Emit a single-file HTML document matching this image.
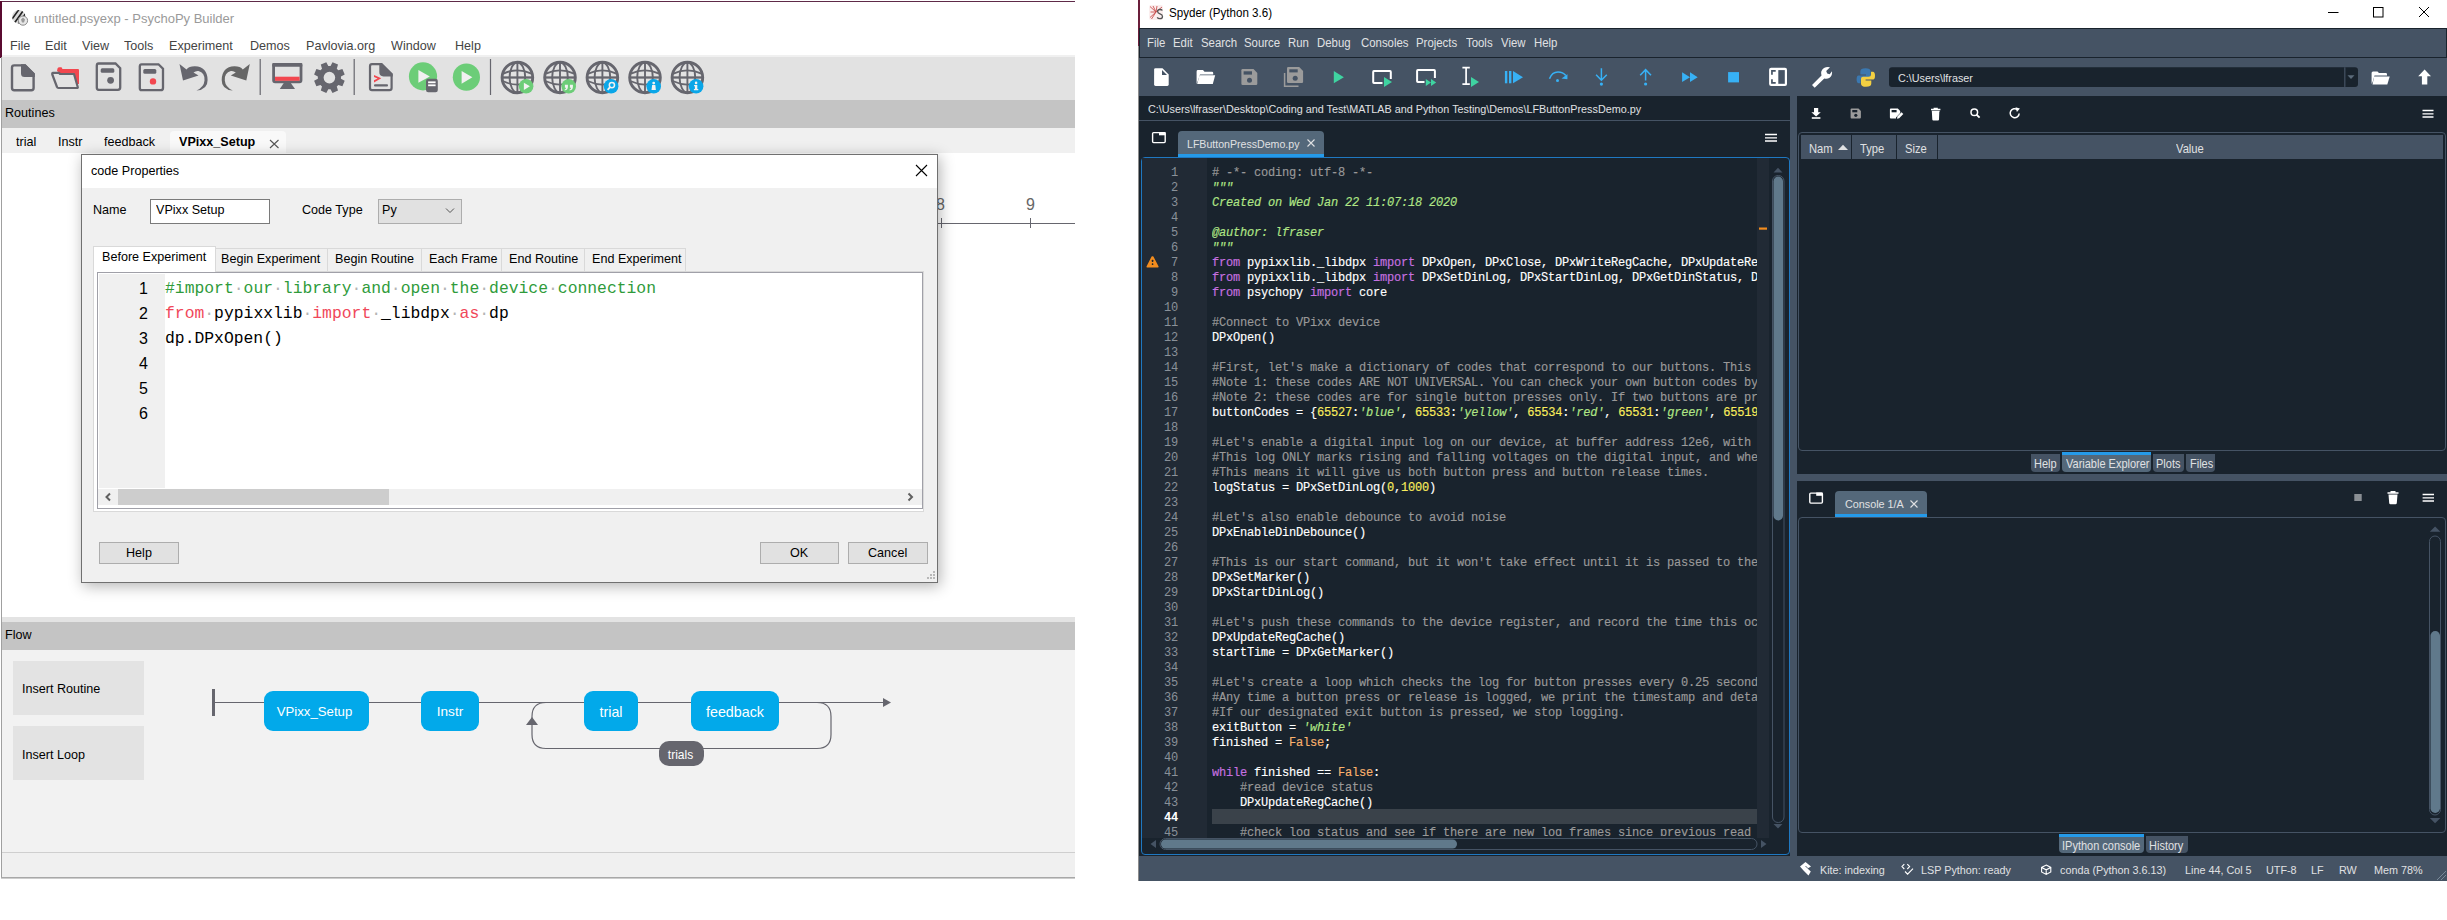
<!DOCTYPE html>
<html><head><meta charset="utf-8">
<style>
*{margin:0;padding:0;box-sizing:border-box}
html,body{width:2447px;height:920px;overflow:hidden;background:#fff;position:relative;font-family:"Liberation Sans",sans-serif}
.a{position:absolute}
.t{position:absolute;white-space:pre;line-height:1}
.pp{font-size:13.6px;color:#000;margin-top:-0.5px;transform:scaleX(0.926);transform-origin:0 0}
.d{font-style:normal;color:#b4b4b4}
.mono{font-family:"Liberation Mono",monospace}
svg{position:absolute;overflow:visible}
</style></head><body>

<!-- ================= PSYCHOPY WINDOW ================= -->
<div class="a" style="left:0;top:0;width:1075px;height:879px;background:#fff">
  <!-- borders -->
  <div class="a" style="left:0;top:1px;width:1075px;height:1px;background:#5e2a48"></div>
  <div class="a" style="left:0;top:1px;width:2px;height:57px;background:#5a0a30"></div>
  <div class="a" style="left:1px;top:57px;width:1px;height:821px;background:#a0a0a0"></div>
<svg class="a" style="left:0;top:0" width="40" height="30">
  <defs><clipPath id="ppc"><circle cx="18.8" cy="16.8" r="6.7"/></clipPath></defs>
  <circle cx="18.8" cy="16.8" r="6.7" fill="#d8d8d8"/>
  <g clip-path="url(#ppc)" stroke="#222" stroke-width="1.6"><path d="M10 22 L20 8 M13 25 L23 11 M17 26 L26 13"/></g>
  <circle cx="23" cy="20.6" r="4.6" fill="#e8e8e8" stroke="#888" stroke-width="1"/>
  <path d="M23 17.5 L25 19.5 L24 22.5 H22 L21 19.5Z" fill="#999"/>
</svg>
  <!-- title -->
  <div class="t" style="left:34px;top:12px;font-size:13px;color:#9a9a9a">untitled.psyexp - PsychoPy Builder</div>
  <!-- menu -->
  <div class="t pp" style="left:10px;top:39px;color:#444">File</div>
  <div class="t pp" style="left:45px;top:39px;color:#444">Edit</div>
  <div class="t pp" style="left:82px;top:39px;color:#444">View</div>
  <div class="t pp" style="left:124px;top:39px;color:#444">Tools</div>
  <div class="t pp" style="left:169px;top:39px;color:#444">Experiment</div>
  <div class="t pp" style="left:250px;top:39px;color:#444">Demos</div>
  <div class="t pp" style="left:306px;top:39px;color:#444">Pavlovia.org</div>
  <div class="t pp" style="left:391px;top:39px;color:#444">Window</div>
  <div class="t pp" style="left:455px;top:39px;color:#444">Help</div>
  <!-- toolbar -->
  <div class="a" style="left:2px;top:55px;width:1073px;height:2px;background:#f0f0f0"></div>
  <div class="a" style="left:2px;top:57px;width:1073px;height:43px;background:#e2e2e2"></div>
  <svg class="a" style="left:0;top:0" width="1075" height="100" viewBox="0 0 1075 100">
<!-- new file -->
<path d="M14.2 65.4 H25 L33.6 74 V88 Q33.6 90.2 31.4 90.2 H14.2 Q12 90.2 12 88 V67.6 Q12 65.4 14.2 65.4Z" fill="none" stroke="#66666e" stroke-width="2.4"/>
<path d="M14 64.2 H25.5 L34.8 73.6 V77 H24.5 Q21 77 21 73.5 V64.2Z" fill="#66666e"/>
<!-- folder -->
<path d="M57 71 L57.5 68.5 Q58 67.3 59.5 67.3 H61.5 L62.5 69 H78 Q79 69 79 70 V84 L77 84 Z" fill="#f2474f"/>
<path d="M53 72.8 H59 L60 74 H74 L77.8 87.2 Q78 88 77 88 H58.5 Q57.3 88 57 87 L52.3 74.5 Q52 72.8 53 72.8Z" fill="#e3e3e3" stroke="#66666e" stroke-width="2.2" stroke-linejoin="round"/>
<!-- save -->
<path d="M98.6 63.5 H115.5 L120.2 68.2 V87.5 Q120.2 89.8 117.9 89.8 H98.6 Q96.8 89.8 96.8 87.5 V65.8 Q96.8 63.5 98.6 63.5Z" fill="none" stroke="#66666e" stroke-width="2.3"/>
<rect x="100.7" y="68.2" width="13.6" height="4.6" rx="1.5" fill="#66666e"/>
<circle cx="110.6" cy="80.3" r="3.4" fill="#66666e"/>
<!-- save as -->
<path d="M141.6 64.3 H158.5 L163 68.8 V88 Q163 90.2 160.8 90.2 H141.6 Q139.8 90.2 139.8 88 V66.6 Q139.8 64.3 141.6 64.3Z" fill="none" stroke="#66666e" stroke-width="2.3"/>
<rect x="143.3" y="69" width="13" height="4.8" rx="1.5" fill="#66666e"/>
<circle cx="153" cy="81.4" r="3.2" fill="#f2474f"/>
<!-- undo -->
<path d="M179.5 64 L183 80.5 L198.5 75.5 L193.5 72.5 Q196 70.5 198.5 71 Q205 72.5 204.5 80.5 Q204 87 196.5 90.6 Q207.8 89.5 207.6 80 Q207.4 67 195 66.3 Q189 66.2 186.5 69.6 Z" fill="#66666e"/>
<!-- redo -->
<g transform="translate(429.3 0) scale(-1 1)"><path d="M179.5 64 L183 80.5 L198.5 75.5 L193.5 72.5 Q196 70.5 198.5 71 Q205 72.5 204.5 80.5 Q204 87 196.5 90.6 Q207.8 89.5 207.6 80 Q207.4 67 195 66.3 Q189 66.2 186.5 69.6 Z" fill="#666"/></g>
<!-- separators -->
<rect x="259.6" y="59" width="1.2" height="36" fill="#66666e"/>
<rect x="353.6" y="59" width="1.2" height="36" fill="#66666e"/>
<rect x="489.9" y="59" width="1.2" height="36" fill="#66666e"/>
<!-- monitor -->
<rect x="273.6" y="64.4" width="27.4" height="17.4" rx="1.5" fill="none" stroke="#66666e" stroke-width="2.8"/>
<rect x="272.2" y="63" width="30.2" height="3.8" rx="1" fill="#66666e"/>
<rect x="275" y="76.7" width="24.6" height="4.1" fill="#f2474f"/>
<path d="M283.8 83 H290.8 L295 89 H279.8Z" fill="#66666e"/>
<!-- gear -->
<g transform="translate(329.4 77.6)">
<path id="gear" fill="#66666e" fill-rule="evenodd" d="M11.55 1.11 L15.29 3.11 L13.01 8.61 L8.95 7.38 L7.38 8.95 L8.61 13.01 L3.11 15.29 L1.11 11.55 L-1.11 11.55 L-3.11 15.29 L-8.61 13.01 L-7.38 8.95 L-8.95 7.38 L-13.01 8.61 L-15.29 3.11 L-11.55 1.11 L-11.55 -1.11 L-15.29 -3.11 L-13.01 -8.61 L-8.95 -7.38 L-7.38 -8.95 L-8.61 -13.01 L-3.11 -15.29 L-1.11 -11.55 L1.11 -11.55 L3.11 -15.29 L8.61 -13.01 L7.38 -8.95 L8.95 -7.38 L13.01 -8.61 L15.29 -3.11 L11.55 -1.11 Z M5.8 0 A5.8 5.8 0 1 0 -5.8 0 A5.8 5.8 0 1 0 5.8 0Z"/>
</g>
<!-- code doc -->
<path d="M372 64.2 H381.5 L391.6 74.2 V88 Q391.6 90.2 389.4 90.2 H372 Q370 90.2 370 88 V66.4 Q370 64.2 372 64.2Z" fill="none" stroke="#66666e" stroke-width="2.2"/>
<path d="M371.5 63.2 H382 L392.7 73.8 V76.4 H383.5 Q379.3 76.4 379.3 72.3 V63.2Z" fill="#66666e"/>
<path d="M374 75 L381.3 78.3 L374 82.5 V80.2 L377.6 78.4 L374 77Z" fill="#f2474f"/>
<rect x="374" y="84.2" width="14" height="2.2" rx="1" fill="#66666e"/>
<!-- run with doc -->
<circle cx="423" cy="76.4" r="14.1" fill="#6ccd78"/>
<path d="M418.4 70 L429.8 76.4 L418.4 82.8Z" fill="#f0f0f0"/>
<rect x="426" y="78.8" width="11.8" height="13.5" rx="2.2" fill="#66666e"/>
<rect x="428.1" y="81.4" width="7.5" height="1.8" fill="#fff"/>
<rect x="428.1" y="84.4" width="7.5" height="1.8" fill="#fff"/>
<!-- play -->
<circle cx="466.4" cy="77.2" r="13.6" fill="#6ccd78"/>
<path d="M461.6 71 L472.4 77.3 L461.6 83.8Z" fill="#f0f0f0"/>
<g stroke="#66666e" fill="none"><circle cx="517.4" cy="77.5" r="15.3" stroke-width="2.9"/><line x1="517.4" y1="62.5" x2="517.4" y2="92.5" stroke-width="1.9"/><line x1="502.4" y1="77.5" x2="532.4" y2="77.5" stroke-width="2.3"/><ellipse cx="517.4" cy="77.5" rx="7.8" ry="15" stroke-width="1.9"/><path d="M503.4 73.7 Q517.4 67.0 531.4 73.7" stroke-width="1.9"/><path d="M503.4 81.3 Q517.4 88.0 531.4 81.3" stroke-width="1.6"/></g><circle cx="526.1" cy="86.3" r="7.3" fill="#6ccd78"/><path d="M523.9 82.7 L529.9 86.3 L523.9 89.89999999999999Z" fill="#f2f2f2"/>
<g stroke="#66666e" fill="none"><circle cx="560" cy="77.5" r="15.3" stroke-width="2.9"/><line x1="560" y1="62.5" x2="560" y2="92.5" stroke-width="1.9"/><line x1="545" y1="77.5" x2="575" y2="77.5" stroke-width="2.3"/><ellipse cx="560" cy="77.5" rx="7.8" ry="15" stroke-width="1.9"/><path d="M546 73.7 Q560 67.0 574 73.7" stroke-width="1.9"/><path d="M546 81.3 Q560 88.0 574 81.3" stroke-width="1.6"/></g><circle cx="568.7" cy="86.3" r="7.3" fill="#6ccd78"/><path d="M564.5 87.8 h3 v-3 h-1.2 q0.2 -1.5 1.5 -1.8 v-1 q-3.3 0.5 -3.3 3.5Z M569.5 87.8 h3 v-3 h-1.2 q0.2 -1.5 1.5 -1.8 v-1 q-3.3 0.5 -3.3 3.5Z" fill="#f2f2f2" transform="rotate(180 568.7 86.3)"/>
<g stroke="#66666e" fill="none"><circle cx="602.4" cy="77.5" r="15.3" stroke-width="2.9"/><line x1="602.4" y1="62.5" x2="602.4" y2="92.5" stroke-width="1.9"/><line x1="587.4" y1="77.5" x2="617.4" y2="77.5" stroke-width="2.3"/><ellipse cx="602.4" cy="77.5" rx="7.8" ry="15" stroke-width="1.9"/><path d="M588.4 73.7 Q602.4 67.0 616.4 73.7" stroke-width="1.9"/><path d="M588.4 81.3 Q602.4 88.0 616.4 81.3" stroke-width="1.6"/></g><circle cx="611.1" cy="86.3" r="7.3" fill="#0aa6e8"/><circle cx="611.9" cy="85.1" r="2.6" fill="none" stroke="#f2f2f2" stroke-width="1.5"/><path d="M610.3000000000001 86.89999999999999 L607.6 89.8" stroke="#f2f2f2" stroke-width="1.8"/>
<g stroke="#66666e" fill="none"><circle cx="645" cy="77.5" r="15.3" stroke-width="2.9"/><line x1="645" y1="62.5" x2="645" y2="92.5" stroke-width="1.9"/><line x1="630" y1="77.5" x2="660" y2="77.5" stroke-width="2.3"/><ellipse cx="645" cy="77.5" rx="7.8" ry="15" stroke-width="1.9"/><path d="M631 73.7 Q645 67.0 659 73.7" stroke-width="1.9"/><path d="M631 81.3 Q645 88.0 659 81.3" stroke-width="1.6"/></g><circle cx="653.7" cy="86.3" r="7.3" fill="#0aa6e8"/><circle cx="653.7" cy="83.1" r="1.4" fill="#f2f2f2"/><path d="M652.1 85.0 h3.2 l0.6 5 h-4.4Z" fill="#f2f2f2"/>
<g stroke="#66666e" fill="none"><circle cx="687.4" cy="77.5" r="15.3" stroke-width="2.9"/><line x1="687.4" y1="62.5" x2="687.4" y2="92.5" stroke-width="1.9"/><line x1="672.4" y1="77.5" x2="702.4" y2="77.5" stroke-width="2.3"/><ellipse cx="687.4" cy="77.5" rx="7.8" ry="15" stroke-width="1.9"/><path d="M673.4 73.7 Q687.4 67.0 701.4 73.7" stroke-width="1.9"/><path d="M673.4 81.3 Q687.4 88.0 701.4 81.3" stroke-width="1.6"/></g><circle cx="696.1" cy="86.3" r="7.3" fill="#0aa6e8"/><circle cx="696.1" cy="82.89999999999999" r="1.3" fill="#f2f2f2"/><path d="M694.1 85.0 h3.2 v4 h1 v1.3 h-4.4 v-1.3 h1 v-2.7 h-0.8Z" fill="#f2f2f2"/></svg>
  <!-- routines header -->
  <div class="a" style="left:2px;top:100px;width:1073px;height:28px;background:#c4c4c4"></div>
  <div class="t pp" style="left:5px;top:106px">Routines</div>
  <!-- tabs row -->
  <div class="a" style="left:2px;top:128px;width:1073px;height:25px;background:#f0f0f0"></div>
  <div class="a" style="left:170px;top:131px;width:116px;height:22px;background:#f9f9f9;border-radius:4px 4px 0 0"></div>
  <div class="t pp" style="left:16px;top:135px">trial</div>
  <div class="t pp" style="left:58px;top:135px">Instr</div>
  <div class="t pp" style="left:104px;top:135px">feedback</div>
  <div class="t pp" style="left:179px;top:135px;font-weight:bold">VPixx_Setup</div>
  <!-- routine canvas -->
  <div class="a" style="left:2px;top:153px;width:1073px;height:464px;background:#fff"></div>
  
  <!-- background timeline -->
<svg class="a" style="left:0;top:0" width="1075" height="880">
  <line x1="930" y1="223.5" x2="1075" y2="223.5" stroke="#66666e" stroke-width="1"/>
  <line x1="941.5" y1="218" x2="941.5" y2="228" stroke="#66666e" stroke-width="1"/>
  <line x1="1030.5" y1="218" x2="1030.5" y2="228" stroke="#66666e" stroke-width="1"/>
  <path d="M270 140 L278.5 148 M278.5 140 L270 148" stroke="#555" stroke-width="1.1"/>
</svg>
<div class="t" style="left:936px;top:197px;font-size:16px;color:#666">8</div>
<div class="t" style="left:1026px;top:197px;font-size:16px;color:#666">9</div>
<!-- flow -->
  <div class="a" style="left:2px;top:617px;width:1073px;height:5px;background:#e3e3e3"></div>
  <div class="a" style="left:2px;top:622px;width:1073px;height:28px;background:#c4c4c4"></div>
  <div class="t pp" style="left:5px;top:628px">Flow</div>
  <div class="a" style="left:2px;top:650px;width:1073px;height:202px;background:#f2f2f2"></div>
  <div class="a" style="left:13px;top:661px;width:131px;height:54px;background:#e3e3e3"></div>
  <div class="a" style="left:13px;top:726px;width:131px;height:54px;background:#e3e3e3"></div>
  <div class="t pp" style="left:22px;top:682px">Insert Routine</div>
  <div class="t pp" style="left:22px;top:748px">Insert Loop</div>
  
<!-- ===== DIALOG ===== -->
<div class="a" style="left:81px;top:154px;width:857px;height:429px;background:#f0f0f0;border:1px solid #707070;box-shadow:2px 3px 14px rgba(0,0,0,0.30)">
</div>
<div class="a" style="left:82px;top:155px;width:855px;height:33px;background:#fff"></div>
<div class="t pp" style="left:91px;top:164.5px">code Properties</div>
<svg class="a" style="left:0;top:0" width="1075" height="600">
  <path d="M916 165 L927 176 M927 165 L916 176" stroke="#000" stroke-width="1.1"/>
</svg>
<div class="t pp" style="left:93px;top:203.5px">Name</div>
<div class="a" style="left:150px;top:199px;width:120px;height:25px;background:#fff;border:1px solid #7a7a7a"></div>
<div class="t pp" style="left:156px;top:203.5px">VPixx Setup</div>
<div class="t pp" style="left:302px;top:203.5px">Code Type</div>
<div class="a" style="left:378px;top:199px;width:84px;height:25px;background:#e1e1e1;border:1px solid #adadad"></div>
<div class="t pp" style="left:382px;top:203.5px">Py</div>
<svg class="a" style="left:0;top:0" width="1075" height="600">
  <path d="M446 208.5 L450 212.5 L454 208.5" stroke="#555" stroke-width="1" fill="none"/>
</svg>
<!-- tabs -->
<div class="a" style="left:215px;top:248px;width:113px;height:24px;background:#f0f0f0;border:1px solid #d9d9d9;border-left:none"></div>
<div class="a" style="left:327px;top:248px;width:95px;height:24px;background:#f0f0f0;border:1px solid #d9d9d9"></div>
<div class="a" style="left:421px;top:248px;width:81px;height:24px;background:#f0f0f0;border:1px solid #d9d9d9"></div>
<div class="a" style="left:501px;top:248px;width:84px;height:24px;background:#f0f0f0;border:1px solid #d9d9d9"></div>
<div class="a" style="left:584px;top:248px;width:102px;height:24px;background:#f0f0f0;border:1px solid #d9d9d9"></div>
<div class="a" style="left:93px;top:271px;width:831px;height:241px;background:#fff;border:1px solid #d9d9d9"></div>
<div class="a" style="left:93px;top:246px;width:123px;height:27px;background:#fff;border:1px solid #d9d9d9;border-bottom:none"></div>
<div class="t pp" style="left:102px;top:250px">Before Experiment</div>
<div class="t pp" style="left:221px;top:252px">Begin Experiment</div>
<div class="t pp" style="left:335px;top:252px">Begin Routine</div>
<div class="t pp" style="left:429px;top:252px">Each Frame</div>
<div class="t pp" style="left:509px;top:252px">End Routine</div>
<div class="t pp" style="left:592px;top:252px">End Experiment</div>
<!-- editor -->
<div class="a" style="left:97px;top:272px;width:826px;height:237px;background:#fff;border:1px solid #a0a0a8"></div>
<div class="a" style="left:99px;top:274px;width:66px;height:214px;background:#f0f0f0"></div>
<div class="a" style="left:98px;top:489px;width:824px;height:16px;background:#f0f0f0"></div>
<div class="a" style="left:118px;top:489px;width:271px;height:16px;background:#cdcdcd"></div>
<svg class="a" style="left:0;top:0" width="1075" height="600">
  <path d="M110 493.5 L106.5 497 L110 500.5" stroke="#606060" stroke-width="2" fill="none"/>
  <path d="M908.5 493.5 L912 497 L908.5 500.5" stroke="#606060" stroke-width="2" fill="none"/>
</svg>
<div class="a" style="left:99px;top:542px;width:80px;height:22px;background:#e1e1e1;border:1px solid #adadad"></div>
<div class="t pp" style="left:126px;top:546.5px">Help</div>
<div class="a" style="left:760px;top:542px;width:79px;height:22px;background:#e1e1e1;border:1px solid #adadad"></div>
<div class="t pp" style="left:790px;top:546.5px">OK</div>
<div class="a" style="left:848px;top:542px;width:80px;height:22px;background:#e1e1e1;border:1px solid #adadad"></div>
<div class="t pp" style="left:868px;top:546.5px">Cancel</div>
<svg class="a" style="left:0;top:0" width="1075" height="600">
  <g fill="#b8b8b8"><rect x="933" y="571" width="2" height="2"/><rect x="930" y="574" width="2" height="2"/><rect x="933" y="574" width="2" height="2"/><rect x="927" y="577" width="2" height="2"/><rect x="930" y="577" width="2" height="2"/><rect x="933" y="577" width="2" height="2"/></g>
</svg>

<!-- dialog code -->
<div class="a" style="left:99px;top:275px;width:822px;height:213px;overflow:hidden">
 <div class="a mono" style="left:66px;top:1px;font-size:16.37px;line-height:25px;white-space:pre;color:#000"><span style="color:#2f9b3b">#import<i class="d">·</i>our<i class="d">·</i>library<i class="d">·</i>and<i class="d">·</i>open<i class="d">·</i>the<i class="d">·</i>device<i class="d">·</i>connection</span>
<span style="color:#f0475a">from</span><i class="d">·</i>pypixxlib<i class="d">·</i><span style="color:#f0475a">import</span><i class="d">·</i>_libdpx<i class="d">·</i><span style="color:#f0475a">as</span><i class="d">·</i>dp
dp.DPxOpen()
 </div>
 <div class="a" style="left:0;top:1px;width:49px;text-align:right;font-size:16px;line-height:25px;color:#000">1<br>2<br>3<br>4<br>5<br>6</div>
</div>

<!-- flow diagram -->
<svg class="a" style="left:0;top:0" width="1075" height="880">
  <rect x="212" y="689" width="3" height="27" fill="#66666e"/>
  <line x1="213" y1="702.5" x2="884" y2="702.5" stroke="#66666e" stroke-width="1.2"/>
  <path d="M883 698 L891 702.5 L883 707Z" fill="#66666e"/>
  <path d="M546 702.5 Q532 702.5 532 716.5 V734.5 Q532 748.5 546 748.5 H817 Q831 748.5 831 734.5 V716.5 Q831 702.5 817 702.5" fill="none" stroke="#66666e" stroke-width="1.2"/>
  <path d="M526 725 L532 717 L538 725Z" fill="#66666e"/>
  <rect x="264" y="691" width="105" height="40" rx="9" fill="#02a9ea"/>
  <rect x="421" y="691" width="58" height="40" rx="9" fill="#02a9ea"/>
  <rect x="584" y="691" width="54" height="40" rx="9" fill="#02a9ea"/>
  <rect x="691" y="691" width="88" height="40" rx="9" fill="#02a9ea"/>
  <rect x="659" y="741" width="45" height="25" rx="10" fill="#66666e"/>
</svg>
<div class="t" style="left:214.5px;width:200px;text-align:center;top:704.5px;font-size:13.2px;color:#fff">VPixx_Setup</div>
<div class="t" style="left:350px;width:200px;text-align:center;top:704.5px;font-size:13.6px;color:#fff">Instr</div>
<div class="t" style="left:511px;width:200px;text-align:center;top:704.5px;font-size:14.2px;color:#fff">trial</div>
<div class="t" style="left:635px;width:200px;text-align:center;top:704.5px;font-size:14.3px;color:#fff">feedback</div>
<div class="t" style="left:580.5px;width:200px;text-align:center;top:748.5px;font-size:12px;color:#fff">trials</div>

  
  <!-- status bar -->
  <div class="a" style="left:2px;top:852px;width:1073px;height:1px;background:#cfcfcf"></div>
  <div class="a" style="left:2px;top:853px;width:1073px;height:24px;background:#f0f0f0"></div>
  <div class="a" style="left:1px;top:877px;width:1074px;height:1px;background:#a8a8a8"></div>
  <div class="a" style="left:1px;top:878px;width:1074px;height:1px;background:#cdcdcd"></div>
</div>

<!-- ================= SPYDER WINDOW ================= -->
<div class="a" style="left:1139px;top:0;width:1308px;height:881px;background:#455364"></div>
<div class="a" style="left:1139px;top:0;width:1308px;height:28px;background:#fff"></div>
<div class="a" style="left:1138px;top:46px;width:1px;height:835px;background:#8c8c8c"></div>
<div class="a" style="left:1138px;top:0;width:1.5px;height:46px;background:#6a1e3a"></div>
<div class="t" style="left:1169px;top:6.70px;font-size:12.53px;color:#000;transform:scaleX(0.9259);transform-origin:0 0;">Spyder (Python 3.6)</div>
<svg class="a" style="left:0;top:0" width="2447" height="30">
<rect x="1149" y="5" width="14" height="15" rx="2" fill="#fbeeee"/>
<path d="M1150 6.5 L1156 12 L1150 17.5 M1150.5 12 H1156 M1153 6 L1156 12 M1151.5 19 L1156 12 M1157 6 L1156 12 L1162 7" stroke="#c9504f" stroke-width="0.9" fill="none"/>
<path d="M1162.3 10.6 Q1161.8 9.5 1160 9.5 Q1157.6 9.5 1157.6 11.5 Q1157.6 13 1160 13.8 Q1162.5 14.6 1162.5 16.4 Q1162.5 18.6 1159.8 18.6 Q1158 18.6 1157.2 17.3" stroke="#555" stroke-width="1.3" fill="none"/>
<path d="M2328 12.5 H2338.5" stroke="#000" stroke-width="1"/>
<rect x="2373.5" y="7.5" width="9.5" height="9.5" fill="none" stroke="#000" stroke-width="1"/>
<path d="M2419 7 L2429 17 M2429 7 L2419 17" stroke="#000" stroke-width="1"/>
</svg>
<div class="a" style="left:1139px;top:28px;width:1308px;height:30px;background:#19232d"></div>
<div class="a" style="left:1140px;top:29px;width:1306px;height:28px;background:#455364"></div>
<div class="t" style="left:1147px;top:37.01px;font-size:12.31px;color:#e0e1e3;transform:scaleX(0.9259);transform-origin:0 0;">File</div>
<div class="t" style="left:1173px;top:37.01px;font-size:12.31px;color:#e0e1e3;transform:scaleX(0.9259);transform-origin:0 0;">Edit</div>
<div class="t" style="left:1201px;top:37.01px;font-size:12.31px;color:#e0e1e3;transform:scaleX(0.9259);transform-origin:0 0;">Search</div>
<div class="t" style="left:1244px;top:37.01px;font-size:12.31px;color:#e0e1e3;transform:scaleX(0.9259);transform-origin:0 0;">Source</div>
<div class="t" style="left:1288px;top:37.01px;font-size:12.31px;color:#e0e1e3;transform:scaleX(0.9259);transform-origin:0 0;">Run</div>
<div class="t" style="left:1317px;top:37.01px;font-size:12.31px;color:#e0e1e3;transform:scaleX(0.9259);transform-origin:0 0;">Debug</div>
<div class="t" style="left:1360.5px;top:37.01px;font-size:12.31px;color:#e0e1e3;transform:scaleX(0.9259);transform-origin:0 0;">Consoles</div>
<div class="t" style="left:1416px;top:37.01px;font-size:12.31px;color:#e0e1e3;transform:scaleX(0.9259);transform-origin:0 0;">Projects</div>
<div class="t" style="left:1466px;top:37.01px;font-size:12.31px;color:#e0e1e3;transform:scaleX(0.9259);transform-origin:0 0;">Tools</div>
<div class="t" style="left:1501px;top:37.01px;font-size:12.31px;color:#e0e1e3;transform:scaleX(0.9259);transform-origin:0 0;">View</div>
<div class="t" style="left:1534px;top:37.01px;font-size:12.31px;color:#e0e1e3;transform:scaleX(0.9259);transform-origin:0 0;">Help</div>
<svg class="a" style="left:0;top:0" width="2447" height="100">
<path d="M1155.5 68.2 H1162.5 L1168.7 74.4 V84.6 Q1168.7 86 1167.3 86 H1155.5 Q1154.1 86 1154.1 84.6 V69.6 Q1154.1 68.2 1155.5 68.2Z" fill="#ffffff"/>
<path d="M1162 70 L1167 75 H1162Z" fill="#455364"/>
<path d="M1196.6 71.5 Q1196.6 70.1 1198 70.1 H1203 L1204.5 71.8 H1212 Q1213.2 71.8 1213.2 73 V74.5 H1200 L1197.8 81 L1196.6 84Z" fill="#ffffff"/>
<path d="M1199.5 75.2 H1215.2 L1212.8 84 H1197.2Z" fill="#ffffff"/>
<path d="M1242.5 69.1 H1253.5 L1257.3 72.9 V83.8 Q1257.3 85 1256.1 85 H1242.5 Q1241.4 85 1241.4 83.8 V70.3 Q1241.4 69.1 1242.5 69.1Z" fill="#9b9b9b"/>
<rect x="1243.6" y="71.3" width="8.4" height="3.3" fill="#455364"/>
<circle cx="1249.5" cy="80.3" r="2.5" fill="#455364"/>
<path d="M1288.2 67.1 H1299.2 L1303.1 71 V81.8 Q1303.1 83 1301.9 83 H1288.2 Q1287 83 1287 81.8 V68.3 Q1287 67.1 1288.2 67.1Z" fill="#9b9b9b"/>
<rect x="1289.3" y="69.3" width="8.4" height="3.1" fill="#455364"/>
<circle cx="1295.2" cy="78.3" r="2.5" fill="#455364"/>
<path d="M1284.6 73 V86.3 H1298.5" fill="none" stroke="#9b9b9b" stroke-width="1.5"/>
<path d="M1333.8 71.1 L1343.9 77.3 L1333.8 83.3Z" fill="#3fd3a1"/>
<path d="M1382.5 83 H1373.9 Q1373.2 83 1373.2 82.2 V71.9 Q1373.2 71.1 1373.9 71.1 H1390 Q1390.8 71.1 1390.8 71.9 V79" fill="none" stroke="#ffffff" stroke-width="2"/>
<path d="M1384 77 L1392 82 L1384 87Z" fill="#3fd3a1"/>
<path d="M1424.5 82 H1417.9 Q1417.1 82 1417.1 81.2 V70.9 Q1417.1 70.1 1417.9 70.1 H1434.1 Q1434.9 70.1 1434.9 70.9 V78" fill="none" stroke="#ffffff" stroke-width="2"/>
<path d="M1425.8 79 L1431 82.5 L1425.8 86Z M1431 79 L1436.2 82.5 L1431 86Z" fill="#3fd3a1"/>
<path d="M1462.4 67.6 H1469.8 M1466.1 67.6 V84.2 M1462.4 84.2 H1469.8" stroke="#ffffff" stroke-width="1.7" fill="none"/>
<path d="M1471 77 L1479 82 L1471 87Z" fill="#3fd3a1"/>
<rect x="1504.9" y="71" width="2.4" height="12.3" fill="#37b1f5"/>
<rect x="1509" y="71" width="2.4" height="12.3" fill="#37b1f5"/>
<path d="M1513 71 L1523 77.2 L1513 83.3Z" fill="#37b1f5"/>
<path d="M1549.5 78.8 Q1552 72 1558 72 Q1563 72 1565.8 75.5" fill="none" stroke="#37b1f5" stroke-width="1.6"/>
<path d="M1561.5 78.5 L1567.4 79.3 L1567.5 74.3Z" fill="#37b1f5"/>
<circle cx="1557.5" cy="80.4" r="1.5" fill="#37b1f5"/>
<path d="M1601.4 68.2 V80 M1596.1 74.7 L1601.4 80.2 L1606.8 74.7" stroke="#37b1f5" stroke-width="1.5" fill="none"/>
<circle cx="1601.4" cy="84.1" r="1.6" fill="#37b1f5"/>
<path d="M1645.6 80.5 V69.5 M1640.2 75.3 L1645.6 69.7 L1651 75.3" stroke="#37b1f5" stroke-width="1.5" fill="none"/>
<circle cx="1645.6" cy="84" r="1.6" fill="#37b1f5"/>
<path d="M1682.1 72.3 L1690 77.2 L1682.1 82Z M1690 72.3 L1697.7 77.2 L1690 82Z" fill="#37b1f5"/>
<rect x="1728.1" y="72.1" width="10.9" height="10.3" fill="#37b1f5"/>
<rect x="1769.1" y="67.8" width="17.9" height="18.1" rx="2" fill="#ffffff"/>
<rect x="1778.3" y="70.1" width="6.5" height="13.7" fill="#455364"/>
<path d="M1771.1 70.1 H1775.7 V71.8 H1772.8 V74.7 H1771.1Z M1771.1 83.8 H1775.7 V82.1 H1772.8 V79.2 H1771.1Z" fill="#455364"/>
<path transform="translate(-1 -1)" d="M1813 86 L1822.5 76.5 Q1821 71.5 1825 69 Q1828 67.3 1831 68.3 L1827.2 72 L1828.2 74.5 L1830.7 75.3 L1833 72.2 Q1833.6 76.5 1830.6 78.7 Q1828.2 80.3 1825.3 79.5 L1815.7 88.8Z" fill="#ffffff"/>
<path d="M1865.5 68.3 Q1860.3 68.3 1860.3 71.6 V74.5 H1866 V75.5 H1858.5 Q1856.6 75.5 1856.6 79.3 Q1856.6 83.3 1858.8 83.3 H1860.6 V80.8 Q1860.6 78.3 1863.3 78.3 H1868.6 Q1870.6 78.3 1870.6 76.3 V71.4 Q1870.6 68.3 1865.5 68.3Z" fill="#3b78b0"/>
<path d="M1866.1 86.8 Q1871.3 86.8 1871.3 83.5 V80.6 H1865.6 V79.6 H1873.1 Q1875 79.6 1875 75.8 Q1875 71.8 1872.8 71.8 H1871 V74.3 Q1871 76.8 1868.3 76.8 H1863 Q1861 76.8 1861 78.8 V83.7 Q1861 86.8 1866.1 86.8Z" fill="#f4d042"/>
<rect x="1889" y="67.3" width="469" height="19.6" rx="3" fill="#19232d"/>
<rect x="2344.2" y="67.3" width="1.2" height="19.6" fill="#455364"/>
<path d="M2347.5 75.3 H2354.5 L2351 79Z" fill="#5b6b7a"/>
<path d="M2371.6 73 Q2371.6 71.4 2373 71.4 H2377.5 L2379 73 H2385.8 Q2387 73 2387 74.2 V75.5 H2374.5 L2372.8 81.5 L2371.6 84Z" fill="#ffffff"/>
<path d="M2374.2 76.6 H2389.7 L2387.3 84.6 H2372.5Z" fill="#ffffff"/>
<path d="M2424.6 69.5 L2431 76.3 H2427.3 V84.6 H2421.9 V76.3 H2418.2Z" fill="#ffffff"/>
</svg>
<div class="t" style="left:1898px;top:71.64px;font-size:11.66px;color:#e0e1e3;transform:scaleX(0.9259);transform-origin:0 0;">C:\Users\lfraser</div>
<div class="a" style="left:1139px;top:96px;width:651px;height:760px;background:#19232d"></div>
<div class="a" style="left:1797px;top:96px;width:650px;height:378px;background:#19232d"></div>
<div class="a" style="left:1797px;top:481px;width:650px;height:375px;background:#19232d"></div>
<div class="t" style="left:1148.3px;top:103.14px;font-size:11.66px;color:#e0e1e3;transform:scaleX(0.9259);transform-origin:0 0;">C:\Users\lfraser\Desktop\Coding and Test\MATLAB and Python Testing\Demos\LFButtonPressDemo.py</div>
<div class="a" style="left:1139px;top:120px;width:651px;height:1px;background:#455364"></div>
<div class="a" style="left:1178px;top:131px;width:146px;height:26px;background:#54687a;border-radius:4px 4px 0 0"></div>
<div class="a" style="left:1178px;top:154px;width:146px;height:3px;background:#259ae9"></div>
<div class="t" style="left:1187px;top:138.55px;font-size:11.45px;color:#e0e1e3;transform:scaleX(0.9259);transform-origin:0 0;">LFButtonPressDemo.py</div>
<svg class="a" style="left:0;top:0" width="2447" height="900">
<path d="M1307.5 139.5 L1314.5 146.5 M1314.5 139.5 L1307.5 146.5" stroke="#e0e1e3" stroke-width="1.1"/>
<rect x="1152.6" y="132.6" width="12.6" height="10" rx="1" fill="none" stroke="#ffffff" stroke-width="1.4"/>
<rect x="1159" y="132" width="6.5" height="3.3" fill="#ffffff"/>
<path d="M1765 134.5 H1777 M1765 137.8 H1777 M1765 141 H1777" stroke="#ffffff" stroke-width="1.3"/>
</svg>
<div class="a" style="left:1141px;top:157px;width:649px;height:698px;border:1px solid #1f78c1;border-radius:4px;background:#19232d"></div>
<div class="a" style="left:1142px;top:158px;width:65px;height:680px;background:#212a35"></div>
<div class="a" style="left:1757px;top:158px;width:12px;height:680px;background:#212a35"></div>
<div class="a" style="left:1212px;top:809px;width:545px;height:15px;background:#3a424a"></div>
<div class="a" style="left:1212px;top:158px;width:545px;height:678px;overflow:hidden"><div class="a mono" style="left:0;top:8px;font-size:12px;letter-spacing:-0.2px;line-height:15px;white-space:pre;color:#fff;-webkit-text-stroke:0.15px currentColor"><span style="color:#999999"># -*- coding: utf-8 -*-</span>
<span style="color:#b0e686;font-style:italic">&quot;&quot;&quot;</span>
<span style="color:#b0e686;font-style:italic">Created on Wed Jan 22 11:07:18 2020</span>

<span style="color:#b0e686;font-style:italic">@author: lfraser</span>
<span style="color:#b0e686;font-style:italic">&quot;&quot;&quot;</span>
<span style="color:#c670e0">from</span> pypixxlib._libdpx <span style="color:#c670e0">import</span> DPxOpen, DPxClose, DPxWriteRegCache, DPxUpdateRe
<span style="color:#c670e0">from</span> pypixxlib._libdpx <span style="color:#c670e0">import</span> DPxSetDinLog, DPxStartDinLog, DPxGetDinStatus, D
<span style="color:#c670e0">from</span> psychopy <span style="color:#c670e0">import</span> core

<span style="color:#999999">#Connect to VPixx device</span>
DPxOpen()

<span style="color:#999999">#First, let&#x27;s make a dictionary of codes that correspond to our buttons. This </span>
<span style="color:#999999">#Note 1: these codes ARE NOT UNIVERSAL. You can check your own button codes by</span>
<span style="color:#999999">#Note 2: these codes are for single button presses only. If two buttons are pr</span>
buttonCodes = {<span style="color:#faed5c">65527</span>:<span style="color:#b0e686;font-style:italic">&#x27;blue&#x27;</span>, <span style="color:#faed5c">65533</span>:<span style="color:#b0e686;font-style:italic">&#x27;yellow&#x27;</span>, <span style="color:#faed5c">65534</span>:<span style="color:#b0e686;font-style:italic">&#x27;red&#x27;</span>, <span style="color:#faed5c">65531</span>:<span style="color:#b0e686;font-style:italic">&#x27;green&#x27;</span>, <span style="color:#faed5c">65519</span>

<span style="color:#999999">#Let&#x27;s enable a digital input log on our device, at buffer address 12e6, with </span>
<span style="color:#999999">#This log ONLY marks rising and falling voltages on the digital input, and whe</span>
<span style="color:#999999">#This means it will give us both button press and button release times.</span>
logStatus = DPxSetDinLog(<span style="color:#faed5c">0</span>,<span style="color:#faed5c">1000</span>)

<span style="color:#999999">#Let&#x27;s also enable debounce to avoid noise</span>
DPxEnableDinDebounce()

<span style="color:#999999">#This is our start command, but it won&#x27;t take effect until it is passed to the</span>
DPxSetMarker()
DPxStartDinLog()

<span style="color:#999999">#Let&#x27;s push these commands to the device register, and record the time this oc</span>
DPxUpdateRegCache()
startTime = DPxGetMarker()

<span style="color:#999999">#Let&#x27;s create a loop which checks the log for button presses every 0.25 second</span>
<span style="color:#999999">#Any time a button press or release is logged, we print the timestamp and deta</span>
<span style="color:#999999">#If our designated exit button is pressed, we stop logging.</span>
exitButton = <span style="color:#b0e686;font-style:italic">&#x27;white&#x27;</span>
finished = <span style="color:#fab16c">False</span>;

<span style="color:#c670e0">while</span> finished == <span style="color:#fab16c">False</span>:
    <span style="color:#999999">#read device status</span>
    DPxUpdateRegCache()

    <span style="color:#999999">#check log status and see if there are new log frames since previous read</span></div></div>
<div class="a" style="left:1142px;top:158px;width:66px;height:678px;overflow:hidden"><div class="a mono" style="left:0;top:8px;width:36px;text-align:right;font-size:12px;letter-spacing:-0.2px;line-height:15px;white-space:pre;color:#8a9199">1
2
3
4
5
6
7
8
9
10
11
12
13
14
15
16
17
18
19
20
21
22
23
24
25
26
27
28
29
30
31
32
33
34
35
36
37
38
39
40
41
42
43
<b style="color:#fff">44</b>
45</div></div>
<svg class="a" style="left:0;top:0" width="2447" height="900">
<path d="M1152.5 256.3 Q1153 256 1153.4 256.6 L1158.6 266.5 Q1158.8 267.5 1157.8 267.5 H1147.2 Q1146.2 267.5 1146.5 266.5 L1151.6 256.6 Q1152 256 1152.5 256.3Z" fill="#f28c1e"/>
<rect x="1151.8" y="259.8" width="1.5" height="2.3" rx="0.5" fill="#19232d"/>
<rect x="1151.8" y="263.3" width="1.5" height="1.7" rx="0.5" fill="#19232d"/>
<rect x="1759" y="227.5" width="8" height="2.2" fill="#f28c1e"/>
<path d="M1773.5 172.5 L1778 167.8 L1782.5 172.5Z" fill="#455364"/>
<rect x="1772.5" y="175.5" width="11.5" height="647" rx="5.5" fill="none" stroke="#455364" stroke-width="1"/>
<rect x="1773.5" y="176.5" width="9.5" height="344" rx="4.7" fill="#60798b"/>
<path d="M1773.5 824 L1778 828.5 L1782.5 824Z" fill="#455364"/>
<path d="M1156 840 L1150.5 844 L1156 848Z" fill="#455364"/>
<rect x="1160" y="838.5" width="597" height="11" rx="5.5" fill="none" stroke="#455364" stroke-width="1"/>
<rect x="1161" y="839.5" width="296" height="9" rx="4.5" fill="#60798b"/>
<path d="M1761 840 L1766.5 844 L1761 848Z" fill="#455364"/>
</svg>
<svg class="a" style="left:0;top:0" width="2447" height="900">
<path d="M1814 108 H1818.2 V112.3 H1820.8 L1816.1 116.4 L1811.4 112.3 H1814Z" fill="#fff"/>
<rect x="1811.8" y="117.2" width="8.6" height="1.6" fill="#fff"/>
<path d="M1851.5 108.6 H1858.5 L1860.9 111 V117.5 Q1860.9 118.6 1859.8 118.6 H1851.5 Q1850.6 118.6 1850.6 117.5 V109.6 Q1850.6 108.6 1851.5 108.6Z" fill="#9b9b9b"/>
<rect x="1852.3" y="110" width="5" height="2.3" fill="#19232d"/>
<circle cx="1855.8" cy="115.3" r="1.6" fill="#19232d"/>
<path d="M1890.8 108.6 H1897.8 L1900.2 111 V113 L1896 117.5 V118.6 H1890.8 Q1889.9 118.6 1889.9 117.5 V109.6 Q1889.9 108.6 1890.8 108.6Z" fill="#fff"/>
<rect x="1891.6" y="110" width="5" height="2.3" fill="#19232d"/>
<path d="M1897 118.8 L1897.4 116.4 L1901.5 112.3 L1903.3 114.1 L1899.2 118.2Z" fill="#fff"/>
<path d="M1931 109.5 H1940.4 M1933.6 108.3 H1937.8" stroke="#fff" stroke-width="1.3"/>
<path d="M1931.8 110.8 H1939.6 L1939 119.5 Q1939 120.5 1938 120.5 H1933.3 Q1932.4 120.5 1932.3 119.5Z" fill="#fff"/>
<path d="M1940 112 V120 Q1940 121.5 1938.5 121.5 H1934" stroke="#19232d" stroke-width="0.8" fill="none"/>
<circle cx="1974.3" cy="112.2" r="3.3" fill="none" stroke="#fff" stroke-width="1.5"/>
<path d="M1976.5 114.6 L1979.6 117.7" stroke="#fff" stroke-width="1.9"/>
<path d="M2019.2 113.5 A4.5 4.5 0 1 1 2017.5 109.7" fill="none" stroke="#fff" stroke-width="1.5"/>
<path d="M2015.5 107.3 L2019.9 108.6 L2016.9 112Z" fill="#fff"/>
<path d="M2422.5 110.5 H2433.5 M2422.5 113.8 H2433.5 M2422.5 117 H2433.5" stroke="#fff" stroke-width="1.3"/>
</svg>
<div class="a" style="left:1798px;top:132px;width:648px;height:319px;border:1px solid #455364;border-radius:4px"></div>
<div class="a" style="left:1801px;top:135px;width:642px;height:24px;background:#455364"></div>
<div class="a" style="left:1851px;top:135px;width:1px;height:24px;background:#19232d"></div>
<div class="a" style="left:1896px;top:135px;width:1px;height:24px;background:#19232d"></div>
<div class="a" style="left:1937px;top:135px;width:1px;height:24px;background:#19232d"></div>
<div class="t" style="left:1809px;top:143.12px;font-size:12.10px;color:#e0e1e3;transform:scaleX(0.9259);transform-origin:0 0;">Nam</div>
<svg class="a" style="left:0;top:0" width="2447" height="200"><path d="M1838 150 L1843 144.7 L1848 150Z" fill="#e0e1e3"/></svg>
<div class="t" style="left:1860px;top:143.12px;font-size:12.10px;color:#e0e1e3;transform:scaleX(0.9259);transform-origin:0 0;">Type</div>
<div class="t" style="left:1905px;top:143.12px;font-size:12.10px;color:#e0e1e3;transform:scaleX(0.9259);transform-origin:0 0;">Size</div>
<div class="t" style="left:2176px;top:143.12px;font-size:12.10px;color:#e0e1e3;transform:scaleX(0.9259);transform-origin:0 0;">Value</div>
<div class="a" style="left:2031px;top:454px;width:29px;height:18px;background:#455364;border-radius:0 0 4px 4px"></div>
<div class="t" style="left:2034px;top:459.03px;font-size:11.88px;color:#e0e1e3;transform:scaleX(0.9259);transform-origin:0 0;">Help</div>
<div class="a" style="left:2062px;top:454px;width:89px;height:18px;background:#54687a;border-radius:0 0 4px 4px"></div>
<div class="a" style="left:2062px;top:452px;width:89px;height:3px;background:#259ae9"></div>
<div class="t" style="left:2065.5px;top:459.03px;font-size:11.88px;color:#e0e1e3;transform:scaleX(0.9259);transform-origin:0 0;">Variable Explorer</div>
<div class="a" style="left:2153px;top:454px;width:31px;height:18px;background:#455364;border-radius:0 0 4px 4px"></div>
<div class="t" style="left:2156px;top:459.03px;font-size:11.88px;color:#e0e1e3;transform:scaleX(0.9259);transform-origin:0 0;">Plots</div>
<div class="a" style="left:2186px;top:454px;width:29px;height:18px;background:#455364;border-radius:0 0 4px 4px"></div>
<div class="t" style="left:2189.5px;top:459.03px;font-size:11.88px;color:#e0e1e3;transform:scaleX(0.9259);transform-origin:0 0;">Files</div>
<svg class="a" style="left:0;top:0" width="2447" height="900">
<rect x="1809.8" y="493.1" width="12.6" height="10" rx="1" fill="none" stroke="#fff" stroke-width="1.4"/>
<rect x="1816.2" y="492.5" width="6.5" height="3.3" fill="#fff"/>
<rect x="2354.3" y="494" width="7.4" height="7" fill="#8a8f94"/>
<path d="M2387.5 493 H2398.5 M2390.5 491.6 H2395.5" stroke="#fff" stroke-width="1.3"/>
<path d="M2388.5 494.5 H2397.5 L2396.8 503 Q2396.7 504.3 2395.5 504.3 H2390.5 Q2389.3 504.3 2389.2 503Z" fill="#fff"/>
<path d="M2422.6 494.5 H2434 M2422.6 497.8 H2434 M2422.6 501 H2434" stroke="#fff" stroke-width="1.3"/>
</svg>
<div class="a" style="left:1835px;top:491px;width:92px;height:26px;background:#54687a;border-radius:4px 4px 0 0"></div>
<div class="a" style="left:1835px;top:514px;width:92px;height:3px;background:#259ae9"></div>
<div class="t" style="left:1844.5px;top:498.14px;font-size:11.66px;color:#e0e1e3;transform:scaleX(0.9259);transform-origin:0 0;">Console 1/A</div>
<svg class="a" style="left:0;top:0" width="2447" height="900"><path d="M1910.5 500.5 L1917.5 507.5 M1917.5 500.5 L1910.5 507.5" stroke="#e0e1e3" stroke-width="1.1"/></svg>
<div class="a" style="left:1798px;top:517px;width:648px;height:316px;border:1px solid #455364;border-radius:4px"></div>
<svg class="a" style="left:0;top:0" width="2447" height="900">
<path d="M2429.8 531.8 L2435.1 526.6 L2440.4 531.8Z" fill="#455364"/>
<rect x="2429.5" y="536" width="11" height="279" rx="5.5" fill="none" stroke="#455364" stroke-width="1"/>
<rect x="2430.5" y="631" width="9.5" height="182" rx="4.7" fill="#60798b"/>
<path d="M2429.8 818 L2435.1 823.3 L2440.4 818Z" fill="#455364"/>
</svg>
<div class="a" style="left:2059px;top:836px;width:85px;height:17px;background:#54687a;border-radius:0 0 4px 4px"></div>
<div class="a" style="left:2059px;top:834px;width:85px;height:3px;background:#259ae9"></div>
<div class="t" style="left:2062px;top:840.53px;font-size:11.88px;color:#e0e1e3;transform:scaleX(0.9259);transform-origin:0 0;">IPython console</div>
<div class="a" style="left:2146px;top:836px;width:42px;height:17px;background:#455364;border-radius:0 0 4px 4px"></div>
<div class="t" style="left:2149px;top:840.53px;font-size:11.88px;color:#e0e1e3;transform:scaleX(0.9259);transform-origin:0 0;">History</div>
<div class="a" style="left:1139px;top:856px;width:1308px;height:25px;background:#455364"></div>
<svg class="a" style="left:0;top:0" width="2447" height="900">
<path d="M1800 866.5 L1805.5 862 L1811 866.5 L1807.5 868.5 L1810.8 871.5 L1808.5 875.5 L1803.5 870.5Z" fill="#fff"/><path d="M1805.5 866 L1808 868.5" stroke="#455364" stroke-width="0.9"/>
<path d="M1904.3 869 L1902 866.6 L1904.3 864.2 M1907.3 864.2 L1909.6 866.6 L1907.3 869 M1905 871.5 L1907.6 874.2 L1913 868.6" stroke="#fff" stroke-width="1.1" fill="none"/>
<path d="M2046.2 865 L2050.8 867.4 V872 L2046.2 874.4 L2041.6 872 V867.4Z M2041.6 867.4 L2046.2 869.8 L2050.8 867.4 M2046.2 869.8 V874.4" stroke="#fff" stroke-width="1.1" fill="none"/>
<path d="M2437 880 L2446 871 M2441 880 L2446 875" stroke="#7a8a99" stroke-width="1"/>
</svg>
<div class="t" style="left:1820px;top:863.64px;font-size:11.66px;color:#e0e1e3;transform:scaleX(0.9259);transform-origin:0 0;">Kite: indexing</div>
<div class="t" style="left:1921px;top:863.64px;font-size:11.66px;color:#e0e1e3;transform:scaleX(0.9259);transform-origin:0 0;">LSP Python: ready</div>
<div class="t" style="left:2060px;top:863.64px;font-size:11.66px;color:#e0e1e3;transform:scaleX(0.9259);transform-origin:0 0;">conda (Python 3.6.13)</div>
<div class="t" style="left:2185px;top:863.64px;font-size:11.66px;color:#e0e1e3;transform:scaleX(0.9259);transform-origin:0 0;">Line 44, Col 5</div>
<div class="t" style="left:2266px;top:863.64px;font-size:11.66px;color:#e0e1e3;transform:scaleX(0.9259);transform-origin:0 0;">UTF-8</div>
<div class="t" style="left:2311px;top:863.64px;font-size:11.66px;color:#e0e1e3;transform:scaleX(0.9259);transform-origin:0 0;">LF</div>
<div class="t" style="left:2339px;top:863.64px;font-size:11.66px;color:#e0e1e3;transform:scaleX(0.9259);transform-origin:0 0;">RW</div>
<div class="t" style="left:2374px;top:863.64px;font-size:11.66px;color:#e0e1e3;transform:scaleX(0.9259);transform-origin:0 0;">Mem 78%</div>
</body></html>
